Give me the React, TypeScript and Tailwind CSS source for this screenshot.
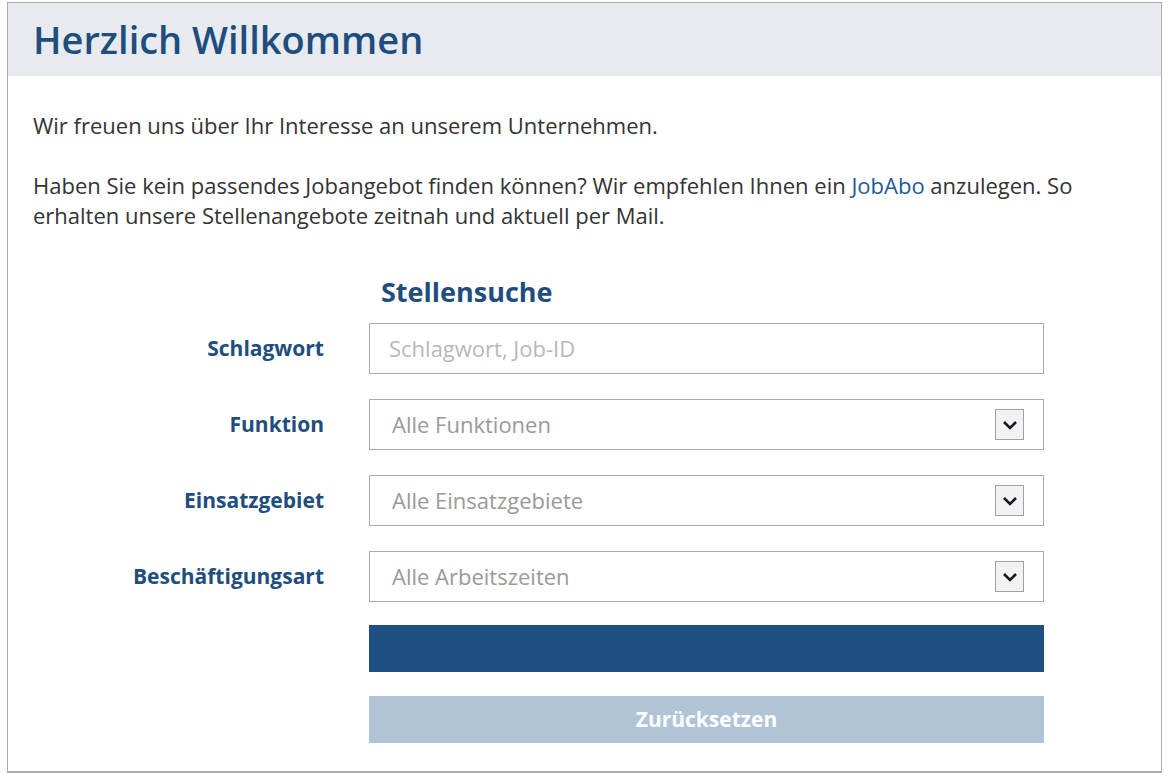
import React from 'react';

const FIELDS = [
  { label: 'Funktion', value: 'Alle Funktionen' },
  { label: 'Einsatzgebiet', value: 'Alle Einsatzgebiete' },
  { label: 'Beschäftigungsart', value: 'Alle Arbeitszeiten' },
];

const Chevron: React.FC = () => (
  <span className="flex h-[31px] w-[29px] items-center justify-center border border-[#a0a0a0] bg-[#f2f2f2]">
    <svg width="16" height="10" viewBox="0 0 16 10" fill="none">
      <path d="M2 2l6 6 6-6" stroke="#111827" strokeWidth="2.6" />
    </svg>
  </span>
);

export default function App() {
  return (
    <div className="h-[780px] w-[1170px] bg-white pl-[7px] pt-[2px] font-['Open_Sans',sans-serif]">
      <div className="h-[771px] w-[1155px] border border-[#ababab] border-b-2">
        <div className="flex h-[73px] items-center bg-[#e7ebf0] px-[25px]">
          <h1 className="text-[38px] font-semibold text-[#1e4d7e]">Herzlich Willkommen</h1>
        </div>
        <div className="px-[25px] pt-[34px] text-[22px] leading-[30px] text-[#333]">
          <p>Wir freuen uns über Ihr Interesse an unserem Unternehmen.</p>
          <p className="mt-[30px]">
            Haben Sie kein passendes Jobangebot finden können? Wir empfehlen Ihnen ein{' '}
            <a className="text-[#1e5a96]">JobAbo</a> anzulegen. So erhalten unsere Stellenangebote
            zeitnah und aktuell per Mail.
          </p>
        </div>
        <div className="mt-[45px] flex flex-col">
          <h2 className="ml-[373px] text-[27px] font-bold leading-[34px] text-[#1e4d7e]">Stellensuche</h2>
          <div className="mt-[14px] flex items-center">
            <label className="w-[316px] text-right text-[21px] font-bold text-[#1e4d7e]">Schlagwort</label>
            <div className="ml-[45px] flex h-[51px] w-[675px] items-center border border-[#a9a9a9] px-[19px] text-[22px] text-[#b8b8b8]">
              Schlagwort, Job-ID
            </div>
          </div>
          {FIELDS.map((f) => (
            <div key={f.label} className="mt-[25px] flex items-center">
              <label className="w-[316px] text-right text-[21px] font-bold text-[#1e4d7e]">{f.label}</label>
              <div className="ml-[45px] flex h-[51px] w-[675px] items-center justify-between border border-[#a9a9a9] pl-[22px] pr-[19px] text-[22px] text-[#999]">
                <span>{f.value}</span>
                <Chevron />
              </div>
            </div>
          ))}
          <button className="ml-[361px] mt-[23px] h-[47px] w-[675px] bg-[#1e5081]" />
          <button className="ml-[361px] mt-[24px] h-[47px] w-[675px] bg-[#b1c3d6] text-[21px] font-bold text-white">
            Zurücksetzen
          </button>
        </div>
      </div>
    </div>
  );
}
